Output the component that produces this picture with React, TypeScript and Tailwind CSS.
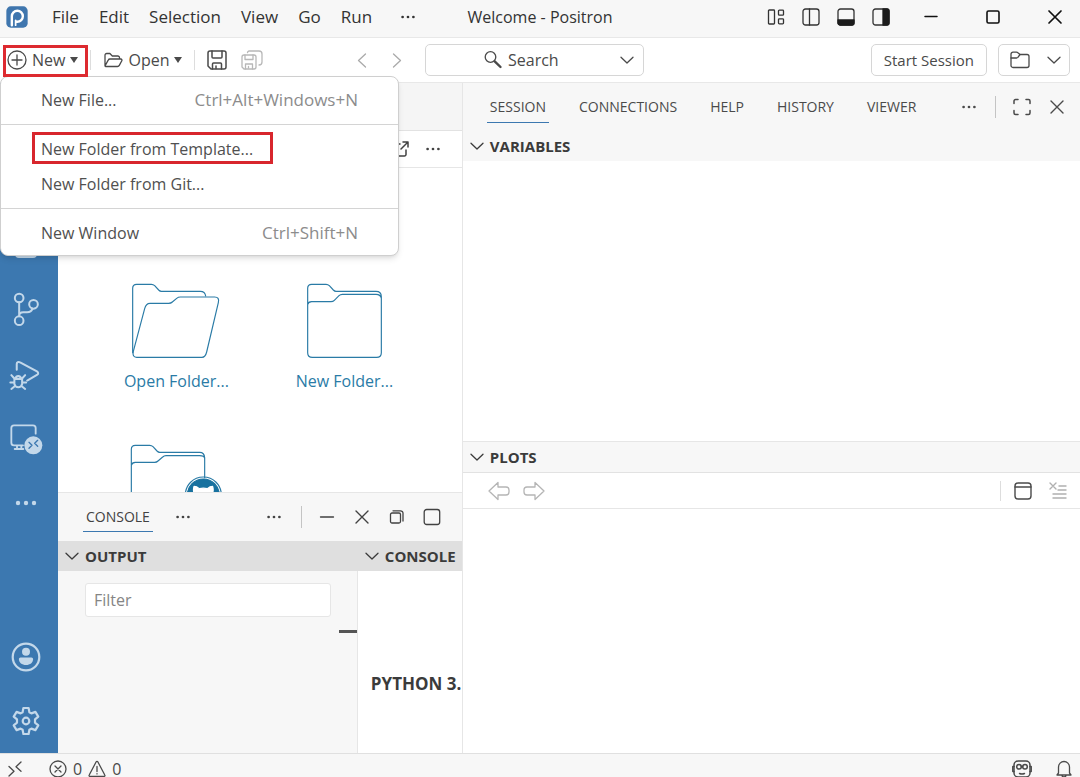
import React from 'react';

interface IconProps {
  className?: string;
  box?: string;
  width?: number;
  children: React.ReactNode;
}

const Icon: React.FC<IconProps> = ({ className = 'size-5', box = '0 0 20 20', width = 1.3, children }) => (
  <svg
    viewBox={box}
    className={`shrink-0 ${className}`}
    fill="none"
    stroke="currentColor"
    strokeWidth={width}
    strokeLinecap="round"
    strokeLinejoin="round"
    aria-hidden="true"
  >
    {children}
  </svg>
);

const Dots = ({ className = 'size-5' }: { className?: string }) => (
  <Icon className={className}>
    <g fill="currentColor" stroke="none">
      <circle cx="4" cy="10" r="1.5" />
      <circle cx="10" cy="10" r="1.5" />
      <circle cx="16" cy="10" r="1.5" />
    </g>
  </Icon>
);

const ChevronDown = () => (
  <Icon className="size-4" box="0 0 16 16" width={1.3}>
    <path d="M2 5.2 8 11l6-5.8" />
  </Icon>
);

const Caret = () => (
  <Icon className="h-[6px] w-2" box="0 0 8 6">
    <path d="M0 0h8L4 6Z" fill="currentColor" stroke="none" />
  </Icon>
);

const CloseIcon = ({ width = 1.4 }: { width?: number }) => (
  <Icon width={width}>
    <path d="m4 4 12 12M16 4 4 16" />
  </Icon>
);

interface ActionProps {
  label: string;
  className?: string;
  children: React.ReactNode;
}

const Action: React.FC<ActionProps> = ({ label, className = 'w-[35px]', children }) => (
  <button type="button" aria-label={label} className={`flex h-8 shrink-0 items-center justify-center ${className}`}>
    {children}
  </button>
);

const menus = ['File', 'Edit', 'Selection', 'View', 'Go', 'Run'];

const TitleBar = () => (
  <header className="flex h-[38px] shrink-0 items-center border-b border-[#e8e8e8] bg-[#f7f7f7] pb-[3px] text-[#333]">
    <div className="flex flex-1 items-center">
      <svg viewBox="0 0 64 64" className="ml-[6px] mr-[14px] size-[22px] shrink-0" aria-hidden="true">
        <rect x="1" y="1" width="62" height="62" rx="13" fill="#3f76ae" />
        <path
          d="M17 56V30a16 16 0 1 1 16 16h-3"
          fill="none"
          stroke="#fff"
          strokeWidth="7"
          strokeLinecap="round"
        />
        <path d="M28 56V42" fill="none" stroke="#fff" strokeWidth="5" strokeLinecap="round" />
      </svg>
      <nav className="flex items-center text-[17px]">
        {menus.map((name) => (
          <button key={name} type="button" className="px-[10px]">
            {name}
          </button>
        ))}
        <Action label="More menus" className="ml-2 w-9">
          <Dots className="size-[18px]" />
        </Action>
      </nav>
    </div>
    <h1 className="text-base">Welcome - Positron</h1>
    <div className="flex flex-1 items-center justify-end">
      <Action label="Customize Layout">
        <Icon className="size-[18px]" box="0 0 18 18">
          <rect x="1.5" y="2" width="6" height="14" rx="0.8" />
          <rect x="11.5" y="2.2" width="5" height="5" rx="0.8" />
          <rect x="11.5" y="10.8" width="5" height="5" rx="0.8" />
        </Icon>
      </Action>
      <Action label="Toggle Side Bar">
        <Icon className="size-[18px]" box="0 0 18 18">
          <rect x="1" y="1" width="16" height="16" rx="2.5" />
          <path d="M7.5 1v16" />
        </Icon>
      </Action>
      <Action label="Toggle Panel">
        <Icon className="size-[18px]" box="0 0 18 18">
          <rect x="1" y="1" width="16" height="16" rx="2.5" />
          <path d="M1 12h16v3a2 2 0 0 1-2 2H3a2 2 0 0 1-2-2Z" fill="#1c1c1c" stroke="#1c1c1c" />
        </Icon>
      </Action>
      <Action label="Toggle Secondary Side Bar">
        <Icon className="size-[18px]" box="0 0 18 18">
          <rect x="1" y="1" width="16" height="16" rx="2.5" />
          <path d="M11 1h4a2 2 0 0 1 2 2v12a2 2 0 0 1-2 2h-4Z" fill="#1c1c1c" stroke="#1c1c1c" />
        </Icon>
      </Action>
      <div className="ml-2 flex gap-3 text-[#111]">
        <Action label="Minimize" className="w-[50px]">
          <Icon width={1.5}>
            <path d="M4 9.5h12" />
          </Icon>
        </Action>
        <Action label="Maximize" className="w-[50px]">
          <Icon width={1.6}>
            <rect x="4" y="4" width="12" height="12" rx="1.5" />
          </Icon>
        </Action>
        <Action label="Close" className="w-[50px]">
          <CloseIcon width={1.7} />
        </Action>
      </div>
    </div>
  </header>
);

const Divider = ({ className = 'h-5 bg-[#ddd]' }: { className?: string }) => <span className={`w-px shrink-0 ${className}`} />;

const ToolBar = () => (
  <div className="flex h-[45px] shrink-0 items-center border-b border-[#e8e8e8] bg-white pr-[10px] text-base">
    <div className="flex w-[344px] shrink-0 items-center">
      <button type="button" aria-haspopup="menu" aria-expanded="true" className="relative ml-[7px] flex h-8 items-center">
        <Icon>
          <circle cx="10" cy="10" r="9" />
          <path d="M5 10h10M10 5v10" />
        </Icon>
        <span className="mx-[5px]">New</span>
        <Caret />
        <span className="absolute -right-[10px] -left-[4px] top-[1px] z-30 h-8 border-3 border-[#dd2a30]" />
      </button>
      <Divider className="ml-[12px] h-5 bg-[#ddd]" />
      <button type="button" className="ml-3 flex h-8 items-center">
        <Icon>
          <path d="M2 16V5.200a1.700 1.700 0 0 1 1.700-1.700h3.200l2.400 2.500h5.500A1.700 1.700 0 0 1 16.500 7.700V9M2 16l3.200-5.900A2 2 0 0 1 7 9h10.800a1.200 1.200 0 0 1 1 1.800l-2.500 4.600a2 2 0 0 1-1.800 1.100H2.900A.9.9 0 0 1 2 16Z" />
        </Icon>
        <span className="mx-[5px]">Open</span>
        <Caret />
      </button>
      <Divider className="ml-3 h-5 bg-[#ddd]" />
      <Action label="Save" className="ml-[12px] w-5">
        <Icon width={1.5}>
          <path d="M1 3a2 2 0 0 1 2-2h14a2 2 0 0 1 2 2v14a2 2 0 0 1-2 2H4l-3-3Z" />
          <path d="M5 1v6a1 1 0 0 0 1 1h8a1 1 0 0 0 1-1V1M5.500 19v-5a1 1 0 0 1 1-1h7a1 1 0 0 1 1 1v5M9 16v2.500" />
        </Icon>
      </Action>
      <Action label="Save All" className="ml-[14px] w-[22px] text-[#b8b8b8]">
        <Icon className="h-5 w-[22px]" box="0 0 22 20">
          <path d="M1 7a2 2 0 0 1 2-2h10a2 2 0 0 1 2 2v10a2 2 0 0 1-2 2H3l-2-2Z" />
          <path d="M4 5v4.500h8V5M4.500 19v-5h7v5M7.500 16.500V18M6.500 2.500A2 2 0 0 1 8 1h10a3 3 0 0 1 3 3v8a3 3 0 0 1-3 3" />
        </Icon>
      </Action>
    </div>
    <Action label="Go Back" className="w-[35px] text-[#aaa]">
      <Icon>
        <path d="m13.500 4-7 6.500 7 6.500" />
      </Icon>
    </Action>
    <Action label="Go Forward" className="w-[35px] text-[#aaa]">
      <Icon>
        <path d="m6.500 4 7 6.500-7 6.500" />
      </Icon>
    </Action>
    <button type="button" className="ml-[11px] flex h-8 w-[219px] items-center rounded-[5px] border border-[#d6d6d6] pr-2 pl-[57px]">
      <Icon className="size-5">
        <circle cx="7.500" cy="7" r="5.300" />
        <path d="m11.700 11.300 5.800 5.700" strokeWidth="2.400" />
      </Icon>
      <span className="ml-[5px] flex-1 text-left">Search</span>
      <ChevronDown />
    </button>
    <button type="button" className="ml-auto h-8 rounded-[5px] border border-[#d6d6d6] px-3 text-[15px]">
      Start Session
    </button>
    <button
      type="button"
      aria-label="Open Folder"
      className="ml-[11px] flex h-8 w-[72px] items-center justify-between rounded-[5px] border border-[#d6d6d6] pr-[7px] pl-[11px]"
    >
      <Icon>
        <path d="M1 4.200A2 2 0 0 1 3 2.200h3.500c.6 0 1 .2 1.400.6L10 4.500h7a2 2 0 0 1 2 2v9a2 2 0 0 1-2 2H3a2 2 0 0 1-2-2Z" />
        <path d="M1 8h5.500c.6 0 1-.2 1.400-.6L10 4.500" />
      </Icon>
      <ChevronDown />
    </button>
  </div>
);

interface MenuItemProps {
  label: string;
  keys?: string;
  marked?: boolean;
}

const MenuItem: React.FC<MenuItemProps> = ({ label, keys, marked }) => (
  <button type="button" role="menuitem" className="relative flex h-[35px] w-full items-center justify-between px-10">
    <span className="text-base">{label}</span>
    {keys && <span className="text-[17px] text-[#8c8c8c]">{keys}</span>}
    {marked && <span className="absolute top-[1px] left-[31px] h-8 w-[241px] border-3 border-[#d8262d]" />}
  </button>
);

const NewMenu = () => (
  <div
    role="menu"
    className="absolute top-[76px] left-0 z-20 w-[399px] rounded-lg border border-[#cfcfcf] bg-white py-[5px] text-[#505050] shadow-md"
  >
    <MenuItem label="New File..." keys="Ctrl+Alt+Windows+N" />
    <hr className="mt-[7px] mb-[6px] border-[#d4d4d4]" />
    <MenuItem label="New Folder from Template..." marked />
    <MenuItem label="New Folder from Git..." />
    <hr className="mt-[7px] mb-[6px] border-[#d4d4d4]" />
    <MenuItem label="New Window" keys="Ctrl+Shift+N" />
  </div>
);

const ActivityBar = () => (
  <nav className="flex w-[58px] shrink-0 flex-col bg-[#3c78b0] pt-1 text-[#c3d8ea]">
    <Action label="Explorer" className="mt-[128px] h-16 w-[52px]">
      <Icon className="size-[22px]" box="0 0 22 22" width={2}>
        <rect x="1" y="1" width="20" height="20" rx="3" />
      </Icon>
    </Action>
    <Action label="Source Control" className="h-16 w-[52px]">
      <Icon className="h-[39px] w-[27px]" box="39 127 80 117" width={6}>
        <circle cx="57" cy="145" r="13" />
        <circle cx="57" cy="213" r="13" />
        <circle cx="100" cy="164" r="13" />
        <path d="M57 158v42M97 177c-3 8-8 11-16 11H69c-7 0-12 4-12 11" />
      </Icon>
    </Action>
    <Action label="Run and Debug" className="h-16 w-[52px]">
      <Icon className="h-[31px] w-[35px]" box="27 333 104 92" width={6}>
        <path d="M50 362v-17c0-5 5-8 10-5l50 27c5 3 5 7 0 10l-29 17" />
        <path d="M43 389h23v15a12 14 0 0 1-23 0ZM46 388a9 11 0 0 1 17 0M31 400h11M67 400h11M34 378l9 10M75 378l-9 10M34 419l10-8M75 419l-10-8" />
      </Icon>
    </Action>
    <Action label="Remote Explorer" className="h-16 w-[52px]">
      <Icon className="h-[31px] w-[33px]" box="29 523 99 93" width={5.500}>
        <path d="M106 552v-17a8 8 0 0 0-8-8H41a8 8 0 0 0-8 8v44a8 8 0 0 0 8 8h27M50 587v11M43 598h26M63 587v11" />
        <circle cx="99" cy="587" r="27" fill="currentColor" stroke="none" />
        <path d="m86 578 9 9-9 9M112 572l-9 9 9 9" stroke="#3c78b0" strokeWidth="4" />
      </Icon>
    </Action>
    <Action label="Additional Views" className="h-16 w-[52px]">
      <Icon className="h-5 w-6" box="0 0 24 20">
        <g fill="currentColor" stroke="none">
          <circle cx="4" cy="10" r="2.200" />
          <circle cx="12" cy="10" r="2.200" />
          <circle cx="20" cy="10" r="2.200" />
        </g>
      </Icon>
    </Action>
    <Action label="Accounts" className="mt-auto h-16 w-[52px]">
      <Icon className="size-[30px]" box="0 0 30 30" width={2.200}>
        <circle cx="15" cy="15" r="13.300" />
        <g fill="currentColor" stroke="none">
          <circle cx="15" cy="9.800" r="4" />
          <path d="M9.500 15.500h11a1.600 1.600 0 0 1 1.600 1.600c0 3.700-3 6-7.100 6s-7.100-2.300-7.100-6a1.600 1.600 0 0 1 1.600-1.600Z" />
        </g>
      </Icon>
    </Action>
    <Action label="Manage" className="h-16 w-[52px]">
      <Icon className="size-[30px]" box="0 0 30 30" width={2.200}>
        <circle cx="15" cy="15" r="3.300" />
        <path d="M12.400 2h5.200l.8 4.200 2 1.200 4-1.500 2.900 4.700-3.300 2.800v3.200l3.300 2.800-2.900 4.700-4-1.500-2 1.200-.8 4.200h-5.200l-.8-4.200-2-1.200-4 1.500-2.900-4.700L6 16.600v-3.200l-3.300-2.800 2.900-4.700 4 1.500 2-1.200Z" />
      </Icon>
    </Action>
  </nav>
);

const WelcomePage = () => (
  <section className="flex min-h-0 flex-1 flex-col overflow-hidden border-r border-[#e6e6e6] bg-white">
    <div className="h-12 shrink-0 border-b border-[#e2e2e2] bg-[#f5f5f5]" />
    <div className="flex h-[37px] shrink-0 items-center justify-end border-b border-[#e6e6e6] pr-[11px] text-[#424242]">
      <Action label="Open in Editor" className="w-[30px]">
        <Icon className="size-[18px]" box="0 0 18 18" width={1.500}>
          <path d="M11 2h5v5M16 2 9 9M8 4H3.500A1.500 1.500 0 0 0 2 5.500v9A1.500 1.500 0 0 0 3.500 16h9a1.500 1.500 0 0 0 1.500-1.500V10" />
        </Icon>
      </Action>
      <Action label="More Actions">
        <Dots className="size-[18px]" />
      </Action>
    </div>
    <div className="grid grid-cols-[168px_168px] justify-center gap-y-[51px] pt-[115px] pl-px text-base text-[#2a7ba6]">
      <button type="button" className="flex flex-col items-center">
        <Icon className="mb-[10px] h-[76px] w-[90px]" box="393 99 270 228" width={3.500}>
          <path d="M398 308V115q0-12 12-12h44q6 0 10 4l12 13q4 4 8 4h117q14 0 16 14" />
          <path d="M400 304l34-128q4-16 16-16h56q7 0 11-4l13-11q5-4 11-4h103q15 0 11 17l-35 148q-4 16-14 16H410q-14 0-10-18Z" />
        </Icon>
        Open Folder...
      </button>
      <button type="button" className="flex flex-col items-center">
        <Icon className="mb-[10px] h-[76px] w-[77px]" box="198 99 231 228" width={3.500}>
          <path d="M203 164v-49q0-12 12-12h43q6 0 10 4l12 13q4 4 8 4h120q16 0 16 16v168q0 14-14 14H217q-14 0-14-14V164q2-9 12-9h58q6 0 10-4l14-14q4-4 10-4h101q14 0 16 12" />
        </Icon>
        New Folder...
      </button>
      <button type="button" aria-label="New Folder from Git" className="flex flex-col items-center">
        <Icon className="h-[76px] w-[92px]" box="390 581 276 228" width={3.500}>
          <path d="M394 645v-48q0-12 12-12h43q6 0 10 4l12 13q4 4 8 4h120q14 0 15 16v60M394 645v164M394 645q2-9 12-9h58q6 0 10-4l14-12q4-4 10-4h101q14 0 15 8" />
          <circle cx="610" cy="734" r="54" />
          <circle cx="610" cy="734" r="48" fill="#17719f" stroke="#17719f" />
          <path
            d="M584 734q-6-14-2-26 8 0 16 7 12-3 24 0 8-7 16-7 4 12-2 26v30h-52Z"
            fill="#fff"
            stroke="#fff"
          />
        </Icon>
      </button>
    </div>
  </section>
);

const PanelHeader = () => (
  <div className="flex h-12 shrink-0 items-center pr-3 text-[#424242]">
    <button type="button" className="ml-[25px] h-[29px] border-b border-[#3c78b0] px-[3px] text-[14px]">
      CONSOLE
    </button>
    <Action label="Additional Panels" className="ml-[13px] w-[35px]">
      <Dots className="size-[18px]" />
    </Action>
    <Action label="Panel Actions" className="ml-auto w-[35px]">
      <Dots className="size-[18px]" />
    </Action>
    <Divider className="ml-[9px] mr-2 h-[22px] bg-[#c4c4c4]" />
    <Action label="Minimize Panel">
      <Icon>
        <path d="M3.500 10h13" />
      </Icon>
    </Action>
    <Action label="Close Panel">
      <CloseIcon />
    </Action>
    <Action label="Restore Panel">
      <Icon>
        <rect x="3.500" y="6" width="10" height="10" rx="1.500" />
        <path d="M6 3.800h7.500a2.500 2.500 0 0 1 2.500 2.500V14" />
      </Icon>
    </Action>
    <Action label="Maximize Panel">
      <Icon>
        <rect x="2.200" y="2.500" width="15.500" height="15" rx="2.500" />
      </Icon>
    </Action>
  </div>
);

const SectionTitle = ({ title }: { title: string }) => (
  <button type="button" className="flex h-[30px] items-center gap-[5px] pl-[6px] text-[15px] font-bold text-[#3b3b3b]">
    <ChevronDown />
    {title}
  </button>
);

const BottomPanel = () => (
  <section className="flex h-[261px] shrink-0 flex-col border-t border-r border-[#e6e6e6] bg-[#f7f7f7]">
    <PanelHeader />
    <div className="flex min-h-0 flex-1">
      <div className="flex min-w-0 flex-1 flex-col">
        <div className="bg-[#dfdfdf]">
          <SectionTitle title="OUTPUT" />
        </div>
        <div className="flex-1 border-r border-[#e6e6e6]">
          <input
            type="text"
            aria-label="Filter"
            placeholder="Filter"
            className="mt-3 ml-[27px] block h-[34px] w-[246px] rounded-[3px] border border-[#e6e6e6] bg-white px-2 text-base placeholder:text-[#858585]"
          />
          <div className="mt-[13px] ml-auto h-[3px] w-[18px] bg-[#555]" />
        </div>
      </div>
      <div className="flex w-[104px] shrink-0 flex-col overflow-hidden">
        <div className="bg-[#dfdfdf]">
          <SectionTitle title="CONSOLE" />
        </div>
        <div className="flex-1 bg-white pt-[101px] pl-[13px] text-[17px] leading-6 font-bold whitespace-nowrap text-[#3b3b3b]">
          PYTHON 3.
        </div>
      </div>
    </div>
  </section>
);

const sessionTabs = ['SESSION', 'CONNECTIONS', 'HELP', 'HISTORY', 'VIEWER'];

const SessionPane = () => (
  <aside className="flex min-w-0 flex-1 flex-col bg-white">
    <div className="flex h-12 shrink-0 items-center bg-[#f7f7f7] pr-[6px]">
      <div className="ml-6 flex gap-[27px] text-[14px]">
        {sessionTabs.map((tab, i) => (
          <button key={tab} type="button" className={`h-[31px] border-b px-[3px] ${i === 0 ? 'border-[#3c78b0]' : 'border-transparent'}`}>
            {tab}
          </button>
        ))}
      </div>
      <Action label="Additional Views" className="ml-auto w-[35px]">
        <Dots className="size-[18px]" />
      </Action>
      <Divider className="ml-[9px] mr-2 h-[22px] bg-[#c4c4c4]" />
      <Action label="Maximize Side Bar">
        <Icon className="size-[18px]" box="0 0 18 18" width={1.500}>
          <path d="M1 5.500V3a1.500 1.500 0 0 1 1.500-1.500H5M13 1.500h2.500A1.500 1.500 0 0 1 17 3v2.500M17 12.500V15a1.500 1.500 0 0 1-1.500 1.500H13M5 16.500H2.500A1.500 1.500 0 0 1 1 15v-2.500" />
        </Icon>
      </Action>
      <Action label="Close Side Bar">
        <CloseIcon />
      </Action>
    </div>
    <section className="flex flex-1 flex-col">
      <div className="bg-[#f7f7f7]">
        <SectionTitle title="VARIABLES" />
      </div>
    </section>
    <section className="flex h-[312px] shrink-0 flex-col border-t border-[#e6e6e6]">
      <div className="border-b border-[#e2e2e2] bg-[#f7f7f7]">
        <SectionTitle title="PLOTS" />
      </div>
      <div className="flex h-9 shrink-0 items-center border-b border-[#e6e6e6] pr-[5px] pl-[19px]">
        <Action label="Previous Plot" className="w-[35px] text-[#b5b5b5]">
          <Icon className="h-5 w-[22px]" box="0 0 22 20">
            <path d="M1 10 10 1.500V6h8a3 3 0 0 1 3 3v2a3 3 0 0 1-3 3h-8v4.500Z" />
          </Icon>
        </Action>
        <Action label="Next Plot" className="w-[35px] text-[#b5b5b5]">
          <Icon className="h-5 w-[22px]" box="0 0 22 20">
            <path d="M21 10 12 1.500V6H4a3 3 0 0 0-3 3v2a3 3 0 0 0 3 3h8v4.500Z" />
          </Icon>
        </Action>
        <Divider className="mr-1 ml-auto h-5 bg-[#ddd]" />
        <Action label="Open Plot In">
          <Icon width={1.400}>
            <rect x="2" y="2" width="16" height="16" rx="3" />
            <path d="M2 6h16" />
          </Icon>
        </Action>
        <Action label="Clear Plots" className="w-[35px] text-[#b0b0b0]">
          <Icon width={1.400}>
            <path d="m2 2 6 6M8 2 2 8M11 5h7M10 9h8M5 13h13M5 17h13" />
          </Icon>
        </Action>
      </div>
    </section>
  </aside>
);

const StatusBar = () => (
  <footer className="h-6 shrink-0 border-t border-[#e0e0e0] bg-[#f7f7f7]">
    <div className="flex h-[29px] items-center px-[6px] text-base leading-4">
      <Action label="Open a Remote Window" className="w-[18px]">
        <Icon className="size-[18px]" box="0 0 18 18">
          <path d="m3 6.500 5 4.700L3 16M15 2l-5 4.700 5 4.500" />
        </Icon>
      </Action>
      <button type="button" aria-label="Problems" className="ml-[25px] flex items-center">
        <Icon className="size-[18px]" box="0 0 18 18">
          <circle cx="9" cy="9" r="8" />
          <path d="m6 6 6 6M12 6l-6 6" />
        </Icon>
        <span className="mx-[6px]">0</span>
        <Icon className="size-[18px]" box="0 0 18 18">
          <path d="M8.200 1.800a.9.9 0 0 1 1.600 0l7 13.200a.9.9 0 0 1-.8 1.400H2a.9.9 0 0 1-.8-1.400ZM9 6.500v5M9 13.700v.2" />
        </Icon>
        <span className="ml-[6px]">0</span>
      </button>
      <Action label="Assistant" className="ml-auto w-5">
        <Icon width={1.500}>
          <rect x="2" y="2" width="16" height="16" rx="4" />
          <path d="M2 7.500H.8v5H2M18 7.500h1.200v5H18M7.500 14.500q2.500 1 5 0M9.300 7.500h1.400" />
          <circle cx="7" cy="7.800" r="2.300" />
          <circle cx="13" cy="7.800" r="2.300" />
        </Icon>
      </Action>
      <Action label="Notifications" className="ml-[22px] w-5">
        <Icon>
          <path d="M4.500 14V8a5.500 5.500 0 0 1 11 0v6l1.500 2H3ZM8 16a2 2 0 0 0 4 0" />
        </Icon>
      </Action>
    </div>
  </footer>
);

const App: React.FC = () => (
  <div className="relative flex h-screen flex-col overflow-hidden bg-white font-['Open_Sans','Noto_Sans',sans-serif] text-[#4a4a4a]">
    <TitleBar />
    <ToolBar />
    <NewMenu />
    <main className="flex min-h-0 flex-1">
      <div className="flex w-3/7 shrink-0">
        <ActivityBar />
        <div className="flex min-w-0 flex-1 flex-col">
          <WelcomePage />
          <BottomPanel />
        </div>
      </div>
      <SessionPane />
    </main>
    <StatusBar />
  </div>
);

export default App;
